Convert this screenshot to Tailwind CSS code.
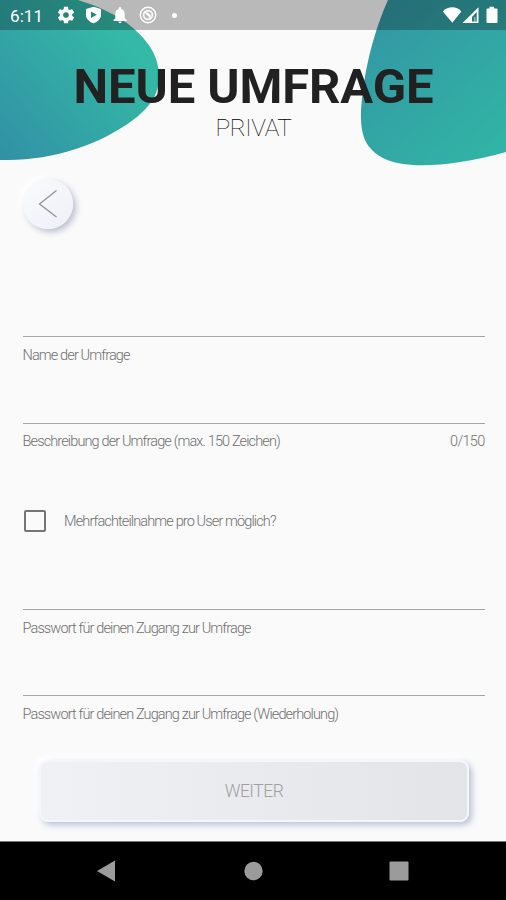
<!DOCTYPE html>
<html lang="de">
<head>
<meta charset="utf-8">
<title>Neue Umfrage</title>
<script src="https://cdn.jsdelivr.net/npm/@tailwindcss/browser@4"></script>
</head>
<body class="bg-[#fafafa]">
<div class="relative isolate flex h-[900px] w-[506px] flex-col overflow-hidden bg-[#fafafa] font-['Roboto',sans-serif]">
  <svg class="absolute left-0 top-0 -z-10" width="506" height="180" viewBox="0 0 506 180">
    <defs>
      <linearGradient id="a" gradientUnits="userSpaceOnUse" x1="-10" y1="150" x2="125" y2="40"><stop offset="0" stop-color="#3190a5"/><stop offset="1" stop-color="#34b9a6"/></linearGradient>
      <linearGradient id="b" gradientUnits="userSpaceOnUse" x1="375" y1="20" x2="490" y2="150"><stop offset="0" stop-color="#3398a4"/><stop offset="1" stop-color="#31b3a5"/></linearGradient>
    </defs>
    <path fill="url(#a)" d="M0 0H78C98 6 118 15 133 28C148 41 159 56 159 77C159 95 149 108 133 120C101 144 54 160 8 160H0Z"/>
    <path fill="url(#b)" d="M388 0C375 29 364 67 361 110C360 136 366 149 383 158C405 169 447 168 506 152V0Z"/>
  </svg>

  <header class="flex h-[30px] shrink-0 items-center bg-black/26 pl-[10px] pr-[7px] text-white">
    <span class="w-[47px] pt-[2px] text-[17px] leading-[20px] tracking-[0.1px]">6:11</span>
    <svg width="18" height="18" viewBox="1.5 1.5 21 21" fill="#fff"><path d="M19.14 12.94c.04-.3.06-.61.06-.94s-.02-.64-.07-.94l2.03-1.58a.49.49 0 0 0 .12-.61l-1.92-3.32a.49.49 0 0 0-.59-.22l-2.39.96a7 7 0 0 0-1.62-.94l-.36-2.54a.48.48 0 0 0-.48-.41h-3.84a.47.47 0 0 0-.47.41l-.36 2.54c-.59.24-1.13.57-1.62.94l-2.39-.96a.48.48 0 0 0-.59.22L2.74 8.87a.47.47 0 0 0 .12.61l2.03 1.58c-.05.3-.09.63-.09.94s.02.64.07.94l-2.03 1.58a.49.49 0 0 0-.12.61l1.92 3.32c.12.22.37.29.59.22l2.39-.96c.5.38 1.03.7 1.62.94l.36 2.54c.05.24.24.41.48.41h3.84c.24 0 .44-.17.47-.41l.36-2.54c.59-.24 1.13-.56 1.62-.94l2.39.96c.22.08.47 0 .59-.22l1.92-3.32a.47.47 0 0 0-.12-.61zM12 15.3a3.3 3.3 0 1 1 0-6.6 3.3 3.3 0 0 1 0 6.6z"/></svg>
    <svg class="ml-[10px]" width="17" height="18" viewBox="0 0 17 18"><path fill="#fff" fill-rule="evenodd" d="M8.5 .7 16 3v6c0 4-3.300 6.800-7.500 8.300C4.300 15.800 1 13 1 9V3ZM6 5.500v6.400l5.800-3.200Z"/></svg>
    <svg class="ml-[10px]" width="16" height="18" viewBox="0 0 16 18" fill="#fff"><path d="M8 1a1.300 1.300 0 0 0-1.300 1.300v.6C4.400 3.500 3.300 5.500 3.300 8v4.200L1.500 14v.9h13V14l-1.800-1.800V8c0-2.500-1.100-4.500-3.400-5.100v-.6A1.300 1.300 0 0 0 8 1ZM6.300 15.600a1.700 1.700 0 0 0 3.400 0Z"/></svg>
    <svg class="ml-[10.5px]" width="18" height="18" viewBox="0 0 18 18" fill="none" stroke="#fff"><circle cx="9" cy="9" r="7.700" stroke-width="1.400"/><circle cx="9" cy="9" r="4.400" stroke-width="1.600"/><path d="M6 6l6 6M8 6.500l3.500 3.500" stroke-width="1.500"/></svg>
    <span class="ml-[15.5px] size-[5px] rounded-full bg-white"></span>
    <svg class="ml-auto" width="57" height="20" viewBox="0 0 57 20" fill="#fff"><path d="M.8 6.500C5.800.9 14.800.9 19.300 6.500L10.300 17.800Z"/><path fill-rule="evenodd" d="M36.500 2.300V18H20.500ZM34.700 7 30 12v4.400h4.700Z"/><path d="M32 12h1.500v4.500H32Z" fill-opacity=".5"/><path d="M47.500 1.700h4.500v1.800h2.500a1 1 0 0 1 1 1V17a1 1 0 0 1-1 1h-9a1 1 0 0 1-1-1V4.500a1 1 0 0 1 1-1h2Z"/></svg>
  </header>

  <main class="flex h-[811px] shrink-0 flex-col pl-[22.5px] pr-[21.5px]">
    <h1 class="-mx-3 mt-[32px] whitespace-nowrap text-center text-[49px] font-bold leading-[50px] tracking-[-0.1px] text-[#212121]">NEUE UMFRAGE</h1>
    <p class="mt-[1px] text-center text-[24.5px] font-thin leading-[30px] tracking-[-0.4px] text-[#000]">PRIVAT</p>
    <button class="mt-[36px] flex size-[50px] items-center justify-center rounded-full bg-linear-to-br from-[#fafbfd] to-[#eef0f7] shadow-[3px_3px_6px_#b9bfd0,-3px_-3px_6px_#ffffff]" aria-label="Zurück">
      <svg width="20" height="30" viewBox="0 0 20 30" fill="none" stroke="#929292" stroke-width="1.300"><path d="M18.500 1.500 1.500 15l17 13"/></svg>
    </button>

    <div class="mt-[107px] flex h-[87px] flex-col border-t border-[#a5a5a5]">
      <label class="mt-[9px] whitespace-nowrap text-[14.500px] font-light leading-[20px] tracking-[-0.870px] text-[#707070]">Name der Umfrage</label>
    </div>
    <div class="flex h-[86px] justify-between border-t border-[#a5a5a5] pt-[8px] text-[14.500px] font-light leading-[20px] text-[#707070]">
      <label class="whitespace-nowrap tracking-[-0.870px]">Beschreibung der Umfrage (max. 150 Zeichen)</label>
      <span class="tracking-[-0.700px]">0/150</span>
    </div>
    <div class="flex h-[24px] items-center">
      <span class="ml-[1.5px] size-[22px] rounded-[2px] border-2 border-[#757575]"></span>
      <span class="ml-[18px] whitespace-nowrap pt-[1px] text-[14.500px] font-light leading-[20px] tracking-[-0.870px] text-[#707070]">Mehrfachteilnahme pro User möglich?</span>
    </div>
    <div class="mt-[76px] flex h-[86px] flex-col border-t border-[#a5a5a5]">
      <label class="mt-[9px] whitespace-nowrap text-[14.500px] font-light leading-[20px] tracking-[-0.870px] text-[#707070]">Passwort für deinen Zugang zur Umfrage</label>
    </div>
    <div class="flex h-[65px] flex-col border-t border-[#a5a5a5]">
      <label class="mt-[9px] whitespace-nowrap text-[14.500px] font-light leading-[20px] tracking-[-0.870px] text-[#707070]">Passwort für deinen Zugang zur Umfrage (Wiederholung)</label>
    </div>
    <button class="ml-[16.5px] mr-[15.5px] flex h-[62px] shrink-0 items-center justify-center rounded-[9px] border-2 border-[#f4f6fc] bg-linear-to-r from-[#eff1f4] to-[#e2e4e8] text-[17.500px] font-light tracking-[-0.500px] text-[#a0a0a0] shadow-[3px_3px_6px_#b9c2d4,-3px_-3px_6px_#ffffff]">WEITER</button>
  </main>

  <nav class="flex h-[59px] shrink-0 border-t border-[#777] bg-black">
    <svg width="506" height="58" viewBox="0 0 506 58" fill="#9b9b9b"><path d="M97 29 115 18.500v21Z"/><circle cx="253.500" cy="29" r="9.200"/><rect x="389.500" y="19.500" width="19" height="19" rx="1"/></svg>
  </nav>
</div>
</body>
</html>
